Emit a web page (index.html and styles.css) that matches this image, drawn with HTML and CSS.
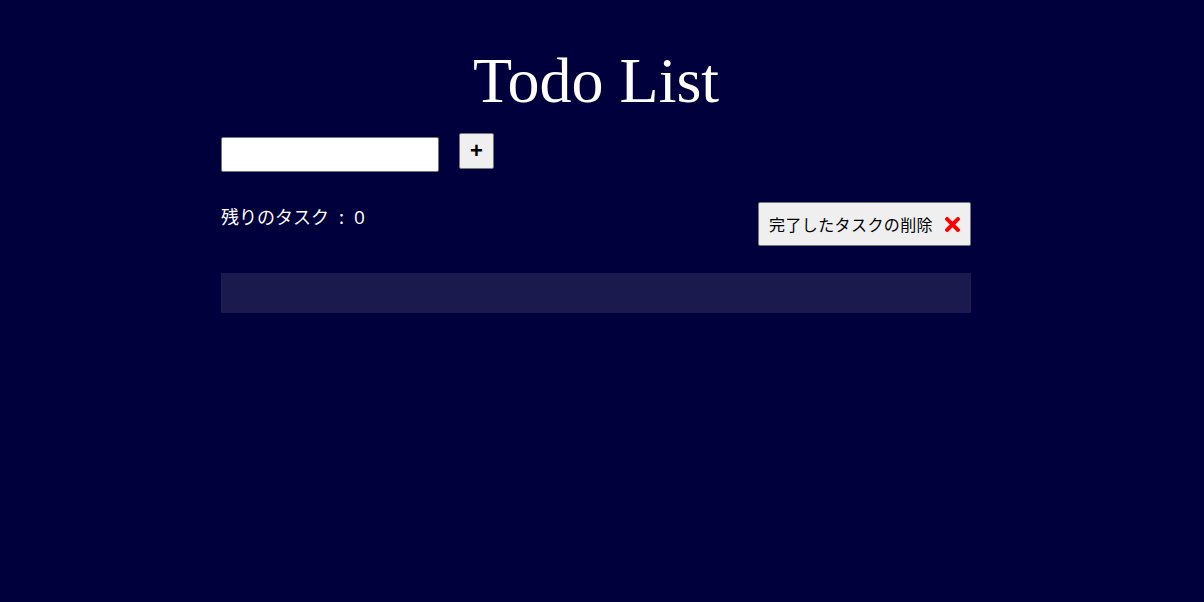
FILE: index.html
```html
<!DOCTYPE html>
<html lang="ja">
<head>
<meta charset="utf-8">
<title>Todo List</title>
<link rel="stylesheet" href="styles.css">
</head>
<body>
<main class="app">
  <h1 class="title">Todo List</h1>
  <form class="add-form">
    <input class="task-input" type="text">
    <button class="add-btn" type="button">+</button>
  </form>
  <div class="status-row">
    <p class="remaining">残りのタスク : <span class="count">0</span></p>
    <button class="clear-btn" type="button"><span class="clear-label">完了したタスクの削除</span><svg class="clear-icon" width="15" height="15" viewBox="0 0 15 15" aria-hidden="true"><path d="M2.2 2.2 L12.8 12.8 M12.8 2.2 L2.2 12.8" stroke="#ff0000" stroke-width="4" stroke-linecap="square"/></svg></button>
  </div>
  <ul class="task-list"></ul>
</main>
</body>
</html>
```

FILE: styles.css
```css
html, body {
  background: #00003c;
}
body {
  margin: 0 12px 0 0;
  font-family: "Noto Sans CJK JP", "Noto Sans", sans-serif;
}
.app {
  width: 750px;
  margin: 0 auto;
}
.title {
  margin: 49px 0 20px;
  font-family: "Liberation Serif", serif;
  font-weight: normal;
  font-size: 64px;
  line-height: 1;
  color: #ffffff;
  text-align: center;
}
.add-form {
  display: flex;
  align-items: flex-start;
  gap: 20px;
  margin: 0;
}
.task-input {
  box-sizing: border-box;
  width: 218px;
  height: 35px;
  margin: 4px 0 0;
  border: 1px solid #767676;
  border-radius: 2px;
  background: #ffffff;
  padding: 0 4px;
}
.add-btn {
  box-sizing: border-box;
  width: 35px;
  height: 36px;
  margin: 0;
  padding: 0;
  border: 1px solid #767676;
  border-radius: 2px;
  background: #efefef;
  font-family: "Liberation Sans", sans-serif;
  font-weight: bold;
  font-size: 22px;
  line-height: 1;
  color: #000;
}
.status-row {
  display: flex;
  justify-content: space-between;
  align-items: flex-start;
  margin-top: 30px;
}
.remaining {
  margin: 1px 0 0;
  font-size: 18px;
  line-height: 27px;
  word-spacing: 6px;
  color: #ffffff;
}
.count {
  font-family: "Open Sans", sans-serif;
  font-size: 19px;
}
.clear-btn {
  box-sizing: border-box;
  display: flex;
  align-items: center;
  gap: 12px;
  height: 44px;
  margin: 0;
  padding: 0 10px;
  border: 1px solid #767676;
  border-radius: 2px;
  background: #efefef;
  font-family: "Noto Sans CJK JP", sans-serif;
  font-size: 16px;
  letter-spacing: 0.4px;
  color: #000;
}
.clear-icon {
  display: block;
  flex: none;
}
.task-list {
  list-style: none;
  margin: 27px 0 0;
  padding: 0;
  height: 40px;
  background: rgba(255, 255, 255, 0.1);
}
```
